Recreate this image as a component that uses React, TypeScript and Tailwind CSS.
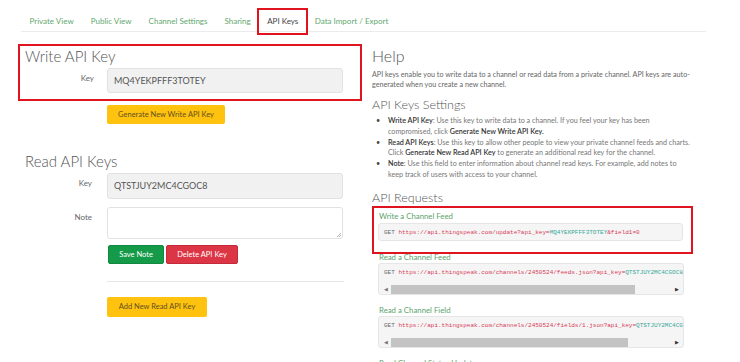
import React from 'react';

const tabs = ['Private View', 'Public View', 'Channel Settings', 'Sharing', 'API Keys', 'Data Import / Export'];

const ScrollBar: React.FC<{ thumb: number }> = ({ thumb }) => (
  <div className="flex items-center h-[9px] mx-[2px] mt-[8px]">
    <span className="w-[9px] text-[5px] leading-[9px] text-[#777] text-center">◀</span>
    <div className="flex-1 h-[9px]">
      <div className="h-[9px] bg-[#c3c3c3] ml-[1px]" style={{ width: thumb }} />
    </div>
    <span className="w-[9px] text-[5px] leading-[9px] text-[#333] text-center">▶</span>
  </div>
);

const Code: React.FC<{ path: string; apiKey: string; tail: string; scroll?: number }> = ({ path, apiKey, tail, scroll }) => (
  <div className="bg-[#f5f5f5] border border-[#e6e6e6] rounded-[3px] overflow-hidden">
    <div className="pl-[5px] pt-[5px] h-[13px] whitespace-nowrap font-['Liberation_Mono',monospace] text-[6px] leading-[8px]">
      <span className="text-[#666]">GET </span>
      <span className="text-[#d63a55]">https://api.thingspeak.com/{path}?api_key=</span>
      <span className="text-[#36a89a]">{apiKey}</span>
      <span className="text-[#d63a55]">{tail}</span>
    </div>
    {scroll ? <ScrollBar thumb={scroll} /> : <div className="h-[3px]" />}
  </div>
);

const Label: React.FC<{ text: string }> = ({ text }) => (
  <div className="w-[76px] text-right pr-[2px] pt-[5px] text-[8px] leading-[10px] text-[#666]">{text}</div>
);

export default function App() {
  return (
    <div className="w-[740px] h-[362px] overflow-hidden bg-white text-[#555] font-['Lato',sans-serif]">
      {/* tabs */}
      <div className="pt-[8px]">
        <div className="ml-[21px] w-[685px] h-[24px] border-b border-[#ececec] flex items-start">
          {tabs.map((t) => (
            <div
              key={t}
              className={
                t === 'API Keys'
                  ? 'h-[27px] px-[8px] border-2 border-[#e0141e] -mx-[2px] relative text-[8px] leading-[23px] text-[#444] whitespace-nowrap'
                  : 'h-[27px] px-[8.5px] text-[8px] leading-[27px] text-[#62a86e] whitespace-nowrap'
              }
            >
              {t}
            </div>
          ))}
        </div>
      </div>

      <div className="flex ml-[18px] mt-[12px]">
        {/* left column */}
        <div className="w-[344px]">
          <div className="border-2 border-[#e0141e] h-[57px]">
            <div className="pl-[5px] mt-[1px] text-[15px] leading-[18px] font-light text-[#555]">Write API Key</div>
            <div className="flex mt-[3px]">
              <Label text="Key" />
              <div className="ml-[11px] w-[236px] h-[25px] bg-[#f1f1f1] border border-[#e2e2e2] rounded-[3px] pl-[6px] text-[9px] leading-[23px] text-[#555]">
                MQ4YEKPFFF3TOTEY
              </div>
            </div>
          </div>
          <div className="ml-[89px] mt-[4px] w-[118px] h-[19px] bg-[#ffc20e] rounded-[2px] text-center text-[7.5px] leading-[19px] text-[#5f5022]">
            Generate New Write API Key
          </div>

          <div className="pl-[7px] mt-[28px] text-[15px] leading-[18px] font-light text-[#555]">Read API Keys</div>
          <div className="flex mt-[3px]">
            <Label text="Key" />
            <div className="ml-[13px] w-[236px] h-[26px] bg-[#f1f1f1] border border-[#e2e2e2] rounded-[3px] pl-[6px] text-[9px] leading-[24px] text-[#555]">
              QTSTJUY2MC4CGOC8
            </div>
          </div>
          <div className="flex mt-[8px]">
            <Label text="Note" />
            <div className="ml-[13px] w-[236px] h-[32px] bg-white border border-[#e2e2e2] rounded-[3px] relative">
              <svg className="absolute right-[1px] bottom-[1px]" width="5" height="5" viewBox="0 0 5 5">
                <path d="M1 5 L5 1 M3 5 L5 3" stroke="#999" strokeWidth="0.7" />
              </svg>
            </div>
          </div>
          <div className="flex ml-[90px] mt-[6px] gap-[2px]">
            <div className="w-[56px] h-[19px] bg-[#149a48] border border-[#118a40] rounded-[2px] text-center text-[7.5px] leading-[17px] text-white">
              Save Note
            </div>
            <div className="w-[72px] h-[19px] bg-[#dc3545] border border-[#c42a3a] rounded-[2px] text-center text-[7.5px] leading-[17px] text-white">
              Delete API Key
            </div>
          </div>
          <div className="ml-[89px] mt-[17px] w-[237px] border-t border-[#e6e6e6]" />
          <div className="ml-[89px] mt-[15px] w-[100px] h-[20px] bg-[#ffc20e] rounded-[2px] text-center text-[7.5px] leading-[20px] text-[#5f5022]">
            Add New Read API Key
          </div>
        </div>

        {/* right column */}
        <div className="ml-[10px] w-[322px]">
          <div className="mt-[3px] text-[16px] leading-[18px] font-light text-[#555]">Help</div>
          <p className="mt-[5px] text-[7.2px] leading-[10px] text-[#666] whitespace-nowrap">
            API keys enable you to write data to a channel or read data from a private channel. API keys are auto-
            <br />
            generated when you create a new channel.
          </p>
          <div className="mt-[7px] text-[12.5px] leading-[16px] font-light text-[#555]">API Keys Settings</div>
          <ul className="mt-[3px] text-[7.2px] leading-[10.8px] text-[#777] whitespace-nowrap">
            <li className="flex">
              <span className="w-[16px] pl-[4px] text-[#444]">•</span>
              <span>
                <b className="font-semibold text-[#333]">Write API Key</b>: Use this key to write data to a channel. If you feel your key has been
                <br />
                compromised, click <b className="font-semibold text-[#333]">Generate New Write API Key.</b>
              </span>
            </li>
            <li className="flex">
              <span className="w-[16px] pl-[4px] text-[#444]">•</span>
              <span>
                <b className="font-semibold text-[#333]">Read API Keys</b>: Use this key to allow other people to view your private channel feeds and charts.
                <br />
                Click <b className="font-semibold text-[#333]">Generate New Read API Key</b> to generate an additional read key for the channel.
              </span>
            </li>
            <li className="flex">
              <span className="w-[16px] pl-[4px] text-[#444]">•</span>
              <span>
                <b className="font-semibold text-[#333]">Note</b>: Use this field to enter information about channel read keys. For example, add notes to
                <br />
                keep track of users with access to your channel.
              </span>
            </li>
          </ul>
          <div className="mt-[9px] text-[12.5px] leading-[16px] font-light text-[#555]">API Requests</div>

          <div className="w-[321px] h-[48px] border-2 border-[#e0141e] pl-[4px] pr-[8px] relative z-10">
            <div className="pt-[3px] pl-[1px] text-[7.8px] leading-[10px] text-[#5ba36b]">Write a Channel Feed</div>
            <div className="mt-[2px] h-[18px]">
              <Code path="update" apiKey="MQ4YEKPFFF3TOTEY" tail="&field1=0" />
            </div>
          </div>

          <div className="pl-[6px] pr-[10px]">
            <div className="-mt-[2px] pl-[1px] text-[7.8px] leading-[10px] text-[#5ba36b]">Read a Channel Feed</div>
            <div className="mt-[1px]">
              <Code path="channels/2450524/feeds.json" apiKey="QTSTJUY2MC4CGOC8" tail="&results=2" scroll={244} />
            </div>
            <div className="mt-[10px] pl-[1px] text-[7.8px] leading-[10px] text-[#5ba36b]">Read a Channel Field</div>
            <div className="mt-[1px]">
              <Code path="channels/2450524/fields/1.json" apiKey="QTSTJUY2MC4CGOC8" tail="&results=2" scroll={237} />
            </div>
            <div className="mt-[10px] pl-[1px] text-[7.8px] leading-[10px] text-[#5ba36b]">Read Channel Status Updates</div>
          </div>
        </div>
      </div>
    </div>
  );
}
